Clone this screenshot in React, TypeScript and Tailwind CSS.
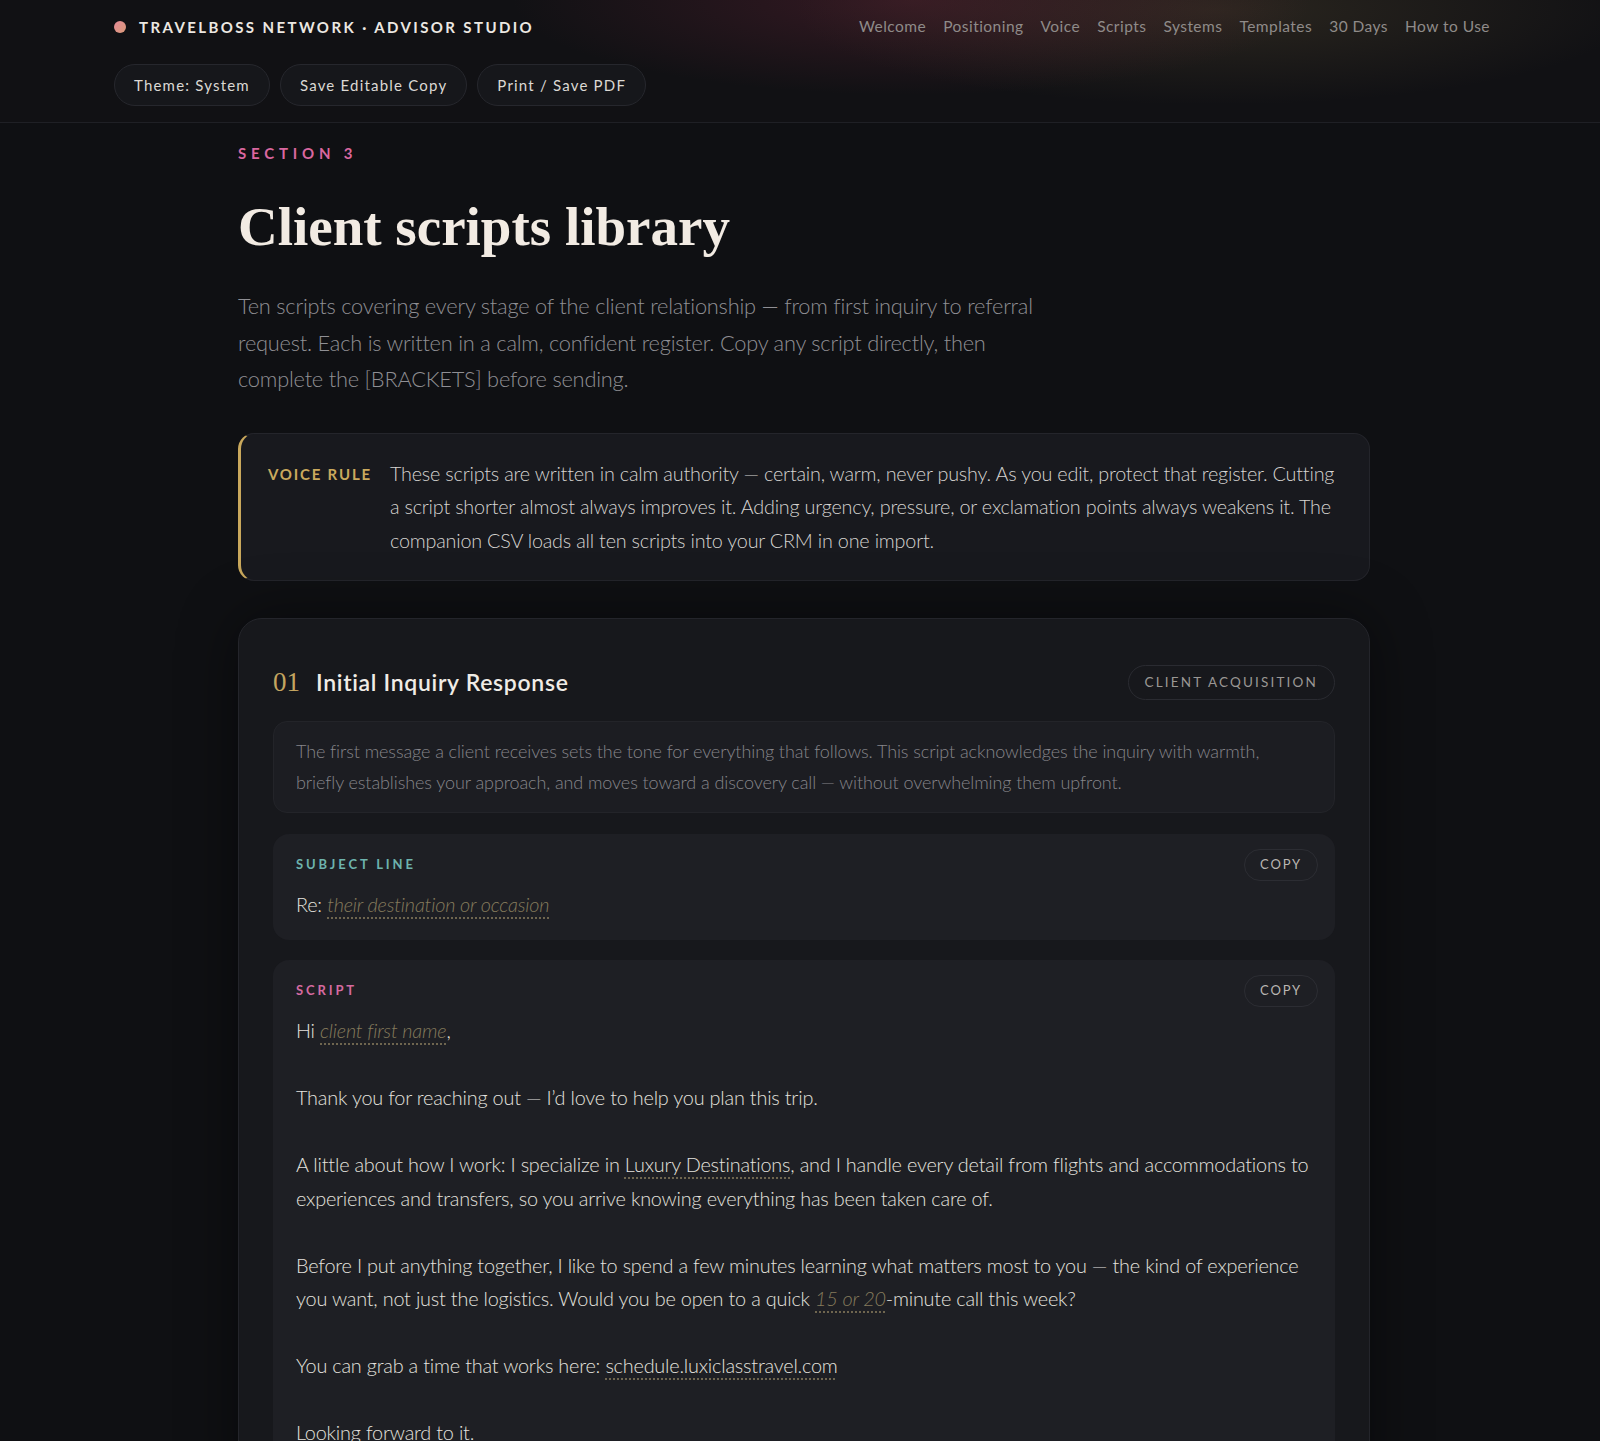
import React from "react";

const NAV = ["Welcome", "Positioning", "Voice", "Scripts", "Systems", "Templates", "30 Days", "How to Use"];
const ACTIONS = ["Theme: System", "Save Editable Copy", "Print / Save PDF"];

const sans = "font-['Lato','Liberation_Sans',sans-serif]";
const serif = "font-['Liberation_Serif','DejaVu_Serif',serif]";

function Blank({ children }: { children: React.ReactNode }) {
  return (
    <span className="italic text-[#857b5c] underline decoration-dotted decoration-[#6f6650] underline-offset-[6px]">
      {children}
    </span>
  );
}

function Filled({ children }: { children: React.ReactNode }) {
  return (
    <span className="underline decoration-dotted decoration-[#6f6650] underline-offset-[6px]">
      {children}
    </span>
  );
}

function CopyButton() {
  return (
    <button className="h-[32px] px-[15px] rounded-full border border-[#2c2d33] text-[13px] tracking-[0.14em] text-[#b9b6b2]">
      COPY
    </button>
  );
}

function Block({
  label,
  labelColor,
  children,
}: {
  label: string;
  labelColor: string;
  children: React.ReactNode;
}) {
  return (
    <div className="rounded-[16px] bg-[#1e1f24] pl-[23px] pr-[17px] pt-[15px] pb-[19px]">
      <div className="flex items-center justify-between h-[32px]">
        <span className={`text-[13px] font-bold tracking-[0.22em] ${labelColor}`}>{label}</span>
        <CopyButton />
      </div>
      <div className="mt-[7px] text-[19.85px] tracking-[-0.01em] leading-[33.5px] font-light text-[#e4e2df]">
        {children}
      </div>
    </div>
  );
}

export default function App() {
  return (
    <div className={`min-h-screen bg-[#0f1013] ${sans}`}>
      <header className="border-b border-[#1f2025] bg-[#111114] bg-[radial-gradient(ellipse_400px_95px_at_57%_0%,rgba(110,38,58,0.38),transparent),radial-gradient(ellipse_420px_95px_at_76%_8%,rgba(100,85,55,0.3),transparent)]">
        <div className="mx-auto max-w-[1380px] pt-[14px] pb-[16px] pl-[4px]">
          <div className="flex items-center justify-between h-[26px]">
            <div className="flex items-center gap-[13px]">
              <span className="w-[12px] h-[12px] rounded-full bg-[linear-gradient(135deg,#e58a98,#d99a78)]" />
              <span className="text-[15px] font-bold tracking-[0.16em] text-[#ece8e2]">
                TRAVELBOSS NETWORK · ADVISOR STUDIO
              </span>
            </div>
            <nav className="flex items-center gap-[17px] text-[15.5px] text-[#8f8b89] tracking-[0.03em]">
              {NAV.map((n) => (
                <span key={n}>{n}</span>
              ))}
            </nav>
          </div>
          <div className="flex gap-[10px] mt-[24px]">
            {ACTIONS.map((a) => (
              <button
                key={a}
                className="h-[42px] px-[19px] rounded-full bg-[#16171b] border border-[#26272d] text-[15px] tracking-[0.08em] text-[#dcd9d4]"
              >
                {a}
              </button>
            ))}
          </div>
        </div>
      </header>

      <main className="mx-auto max-w-[1132px] pt-[22px] pb-[60px] translate-x-[4px]">
        <div className="text-[15px] font-bold tracking-[0.32em] text-[#d9679f] leading-[16px]">SECTION 3</div>
        <h1 className={`${serif} mt-[34px] text-[55px] leading-[64px] font-bold text-[#f2ebe3]`}>
          Client scripts library
        </h1>
        <p className="mt-[29px] max-w-[812px] text-[21.8px] tracking-[-0.01em] leading-[36.5px] font-light text-[#8f8f94]">
          Ten scripts covering every stage of the client relationship — from first inquiry to referral request. Each is
          written in a calm, confident register. Copy any script directly, then complete the [BRACKETS] before sending.
        </p>

        <div className="mt-[35px] flex gap-[18px] rounded-[16px] border border-[#24252b] border-l-[3px] border-l-[#c9a85c] bg-[#18191e] pl-[27px] pr-[26px] pt-[23px] pb-[23px]">
          <span className="shrink-0 pt-[5px] text-[15px] font-bold tracking-[0.12em] text-[#caa95d] leading-[24px]">
            VOICE RULE
          </span>
          <p className="text-[19.8px] tracking-[-0.01em] leading-[33.5px] font-light text-[#d6d4d1]">
            These scripts are written in calm authority — certain, warm, never pushy. As you edit, protect that
            register. Cutting a script shorter almost always improves it. Adding urgency, pressure, or exclamation points
            always weakens it. The companion CSV loads all ten scripts into your CRM in one import.
          </p>
        </div>

        <section className="mt-[37px] rounded-[24px] border border-[#24252b] bg-[#17181c] px-[34px] pt-[43px] pb-[34px] shadow-[0_0_60px_rgba(0,0,0,0.45)]">
          <div className="flex items-center justify-between">
            <div className="flex items-baseline gap-[16px]">
              <span className={`${serif} text-[27px] text-[#c4a560]`}>01</span>
              <h2 className="text-[23px] font-semibold text-[#f0ece6] tracking-[0.03em]">Initial Inquiry Response</h2>
            </div>
            <span className="h-[35px] flex items-center px-[16px] rounded-full border border-[#2a2b31] text-[13.5px] tracking-[0.16em] text-[#9a9794]">
              CLIENT ACQUISITION
            </span>
          </div>

          <div className="mt-[18px] rounded-[14px] border border-[#232429] bg-[#1c1d22] px-[22px] py-[14px] text-[18px] tracking-[-0.005em] leading-[31px] font-light text-[#86858a]">
            The first message a client receives sets the tone for everything that follows. This script acknowledges the
            inquiry with warmth, briefly establishes your approach, and moves toward a discovery call — without
            overwhelming them upfront.
          </div>

          <div className="mt-[21px] flex flex-col gap-[20px]">
            <Block label="SUBJECT LINE" labelColor="text-[#6db3ad]">
              Re: <Blank>their destination or occasion</Blank>
            </Block>
            <Block label="SCRIPT" labelColor="text-[#d56aa0]">
              <div className="flex flex-col gap-[33.5px]">
                <p>
                  Hi <Blank>client first name</Blank>,
                </p>
                <p>Thank you for reaching out — I’d love to help you plan this trip.</p>
                <p>
                  A little about how I work: I specialize in <Filled>Luxury Destinations</Filled>, and I handle every
                  detail from flights and accommodations to experiences and transfers, so you arrive knowing everything
                  has been taken care of.
                </p>
                <p>
                  Before I put anything together, I like to spend a few minutes learning what matters most to you — the
                  kind of experience you want, not just the logistics. Would you be open to a quick{" "}
                  <Blank>15 or 20</Blank>-minute call this week?
                </p>
                <p>
                  You can grab a time that works here: <Filled>schedule.luxiclasstravel.com</Filled>
                </p>
                <p>Looking forward to it.</p>
              </div>
            </Block>
          </div>
        </section>
      </main>
    </div>
  );
}
